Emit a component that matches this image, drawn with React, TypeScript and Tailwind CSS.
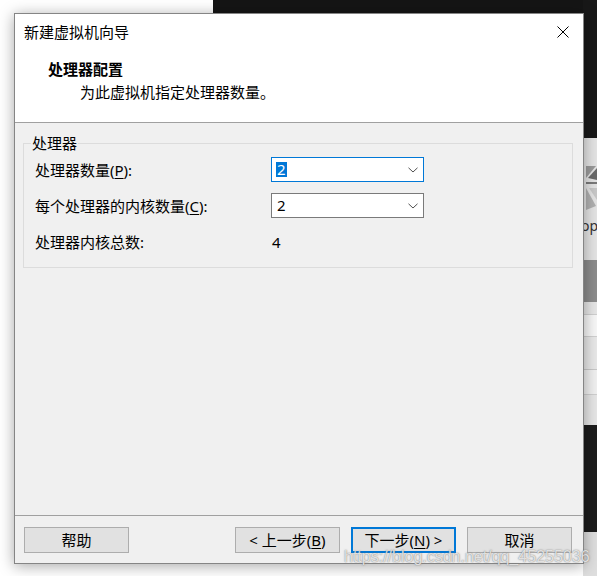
import React from "react";

const font = "font-['Noto_Sans','Noto_Sans_CJK_SC',sans-serif]";

function Chevron() {
  return (
    <svg width="10" height="6" viewBox="0 0 10 6" className="shrink-0">
      <path d="M0.5 0.8 L5 5 L9.5 0.8" fill="none" stroke="#505050" strokeWidth="1" />
    </svg>
  );
}

function Combo({ focused }: { focused?: boolean }) {
  return (
    <div
      className={`h-[25px] w-[153px] bg-white flex items-center justify-between pl-[4px] pr-[5px] border ${
        focused ? "border-[#0078d7]" : "border-[#7a7a7a]"
      }`}
    >
      {focused ? (
        <span className="bg-[#0078d7] text-white leading-[15px] h-[15px] px-[1px] text-[15px] flex items-center">2</span>
      ) : (
        <span className="text-[15px] leading-[15px] px-[1px]">2</span>
      )}
      <Chevron />
    </div>
  );
}

function Btn({ children, primary }: { children: React.ReactNode; primary?: boolean }) {
  return (
    <div
      className={`h-[26px] w-[105px] flex items-center justify-center bg-[#e1e1e1] text-[15px] text-black ${
        primary ? "border-2 border-[#0078d7]" : "border border-[#adadad]"
      }`}
    >
      {children}
    </div>
  );
}

export default function App() {
  return (
    <div className={`relative w-[597px] h-[576px] bg-white overflow-hidden ${font} text-black`}>
      {/* desktop background */}
      <div className="absolute left-[213px] top-0 right-0 h-[14px] bg-[#151515]" />
      <div className="absolute left-[583px] top-0 w-[14px] h-[576px] flex flex-col">
        <div className="h-[138px] bg-[#181818]" />
        <div className="h-[122px] bg-[#e4e4e4] relative flex flex-col items-start pl-[1px]">
          <svg width="14" height="50" viewBox="0 0 14 50" className="mt-[28px]">
            <path d="M2 0 L12 0 L2 12 Z" fill="#9a9a9a" />
            <path d="M4 12 L13 2 L13 14 Z" fill="#6a6a6a" />
            <path d="M2 16 L13 16 L13 18 L2 18 Z" fill="#7a7a7a" />
            <path d="M2 22 L12 40 L2 44 Z" fill="#b0b0b0" />
            <path d="M5 22 L13 22 L13 34 Z" fill="#c8c8c8" />
          </svg>
          <span className="text-[14px] leading-[16px] mt-[2px] text-[#333] -ml-[3px]">op</span>
        </div>
        <div className="h-[42px] bg-[#8c8c8c]" />
        <div className="h-[13px] bg-[#e6e6e6] border-b border-[#cfcfcf]" />
        <div className="h-[22px] bg-[#f7f7f7] border-b border-[#d0d0d0]" />
        <div className="h-[33px] bg-[#e8e8e8] border-b border-[#c8c8c8]" />
        <div className="h-[25px] bg-[#f0f0f0] border-b border-[#cfcfcf] text-[14px] leading-[24px] text-[#333] -ml-[4px]">)</div>
        <div className="h-[30px] bg-[#e6e6e6]" />
        <div className="h-[107px] bg-[#1c1c1c]" />
        <div className="flex-1 bg-[#dedede]" />
      </div>

      {/* dialog window */}
      <div className="absolute left-[14px] top-[13px] w-[570px] h-[551px] border border-[#858585] flex flex-col bg-[#f0f0f0] shadow-[0_2px_14px_rgba(0,0,0,0.35)]">
        <div className="h-[109px] bg-white border-b border-[#a0a0a0] flex flex-col">
          <div className="h-[36px] flex items-center justify-between pl-[9px] pr-[14px]">
            <span className="text-[15px] leading-[20px]">新建虚拟机向导</span>
            <svg width="12" height="12" viewBox="0 0 12 12">
              <path d="M0.5 0.5 L11.5 11.5 M11.5 0.5 L0.5 11.5" stroke="#000" strokeWidth="1" />
            </svg>
          </div>
          <div className="mt-[9px] pl-[33px] text-[15px] leading-[20px] font-bold">处理器配置</div>
          <div className="mt-[3px] pl-[65px] text-[15px] leading-[20px]">为此虚拟机指定处理器数量。</div>
        </div>

        <div className="flex-1 pt-[20px] pl-[8px]">
          <div className="relative w-[550px] h-[125px] border border-[#dcdcdc] pt-[13px] pl-[11px]">
            <span className="absolute left-[7px] -top-[11px] px-[1px] bg-[#f0f0f0] text-[15px] leading-[20px]">处理器</span>
            <div className="grid grid-cols-[236px_153px] auto-rows-[25px] gap-y-[11px] items-center text-[15px] leading-[20px]">
              <span>
                处理器数量(<span className="underline underline-offset-2">P</span>):
              </span>
              <Combo focused />
              <span>
                每个处理器的内核数量(<span className="underline underline-offset-2">C</span>):
              </span>
              <Combo />
              <span>处理器内核总数:</span>
              <span className="pl-[1px]">4</span>
            </div>
          </div>
        </div>

        <div className="h-[48px] border-t border-[#a0a0a0] flex items-start pt-[11px] pl-[9px] pr-[11px]">
          <Btn>帮助</Btn>
          <div className="flex-1" />
          <div className="flex gap-[11px]">
            <Btn>
              &lt; 上一步(<span className="underline underline-offset-2">B</span>)
            </Btn>
            <Btn primary>
              下一步(<span className="underline underline-offset-2">N</span>) &gt;
            </Btn>
            <Btn>取消</Btn>
          </div>
        </div>
      </div>

      {/* watermark */}
      <div className="absolute left-[344px] top-[547px] font-['Liberation_Sans',sans-serif] text-[16px] leading-[20px] text-[rgba(255,255,255,0.75)] [text-shadow:0_0_1px_rgba(90,90,90,0.7),0_0_2px_rgba(120,120,120,0.5)] whitespace-nowrap">
        https://blog.csdn.net/qq_45255036
      </div>
    </div>
  );
}
